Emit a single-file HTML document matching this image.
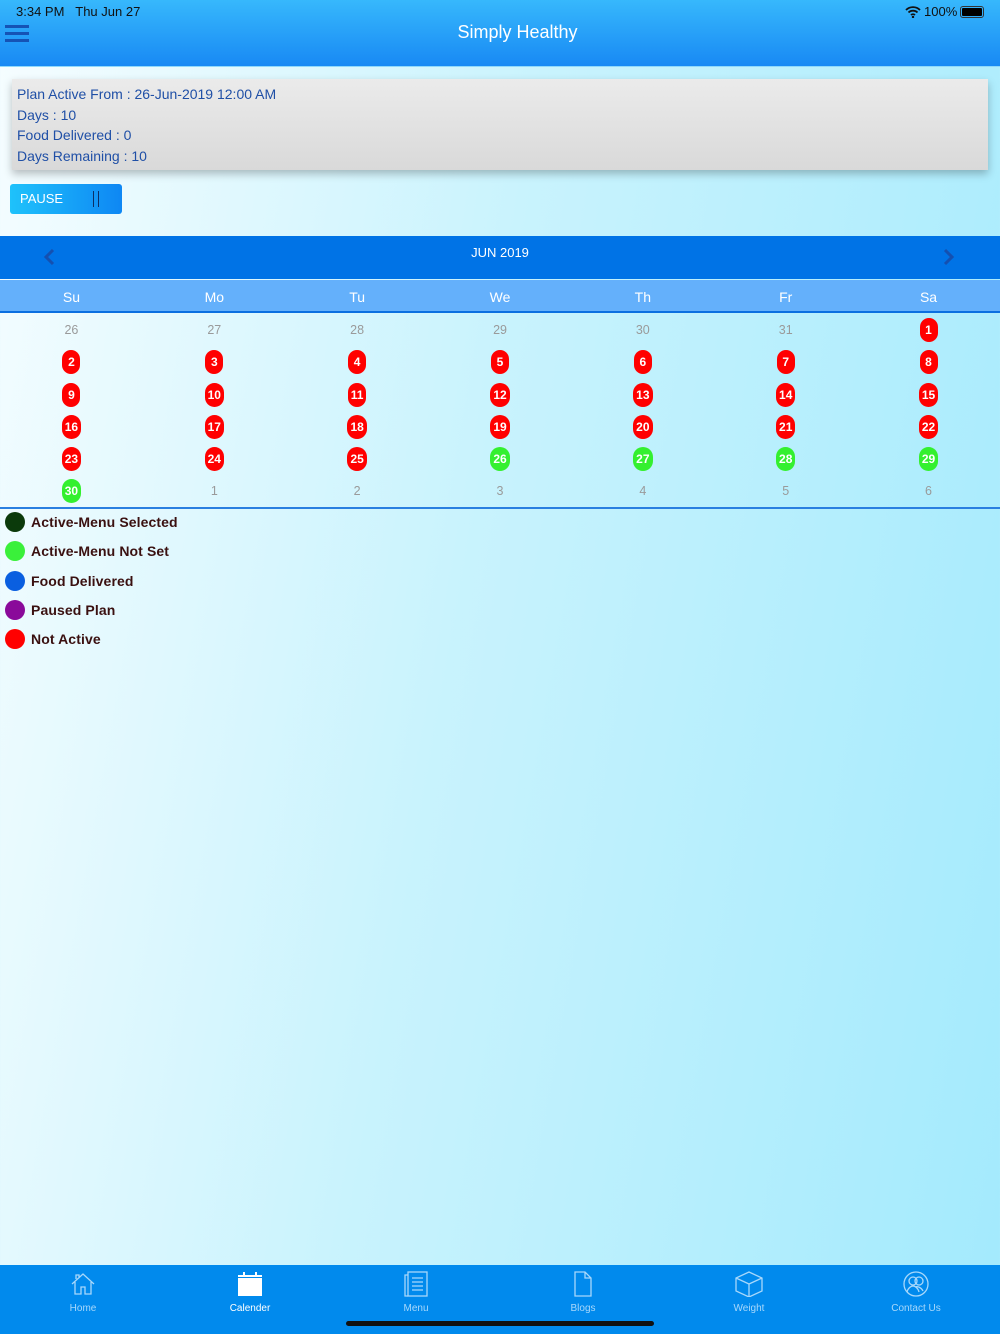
<!DOCTYPE html>
<html><head><meta charset="utf-8"><style>
*{margin:0;padding:0;box-sizing:border-box}
body{width:1000px;height:1334px;position:relative;overflow:hidden;font-family:"Liberation Sans","DejaVu Sans",sans-serif;background:linear-gradient(100deg,#f6fdff 0%,#c9f3fd 45%,#a3eafd 100%)}
.abs{position:absolute}
.hdr{left:0;top:0;width:1000px;height:67px;background:linear-gradient(#37b8fc,#1889f4);border-bottom:1px solid #8ed8fb}
.card{left:12px;top:79px;width:976px;height:91px;background:linear-gradient(#ebebeb,#d9d9d9);box-shadow:0 4px 8px rgba(0,0,0,.25);color:#1f4fa6;font-size:14px;line-height:20.5px;padding:5px 5px}
.btn{left:10px;top:184px;width:112px;height:30px;border-radius:3px;background:linear-gradient(90deg,#1fc2fb,#0e87f4);color:#fff;font-size:13px;line-height:30px;padding-left:10px}
.cal{left:0;top:236px;width:1000px;height:43px;background:#0073e6}
.dn{left:0;top:280px;width:1000px;height:33px;background:#64b0fb;border-bottom:2px solid #0b6fe0}
.cell{position:absolute;width:142.86px;text-align:center;font-size:12.5px}
.b{display:inline-block;color:#fff;font-weight:bold;border-radius:12px;height:24px;line-height:24px;min-width:18px;padding:0 3px;font-size:12px}
.r{background:#ff0000}.g{background:#34f02f}
.gr{color:#9a9a9a}
.leg{left:5px;font-size:14px;font-weight:bold;color:#3a1010;letter-spacing:.1px;line-height:20px}
.leg i{display:inline-block;width:20px;height:20px;border-radius:50%;vertical-align:top;margin-right:6px}
.tab{left:0;top:1265px;width:1000px;height:69px;background:#018aed}
.ti{position:absolute;top:1271px;width:100px;text-align:center;color:#a8d8fb;font-size:10px}
.ti svg{display:block;margin:0 auto 6px}
.hb{position:absolute;left:5px;width:24px;height:3px;background:#1553b5}
</style></head><body>
<div class="abs hdr"></div>
<div class="abs" style="left:16px;top:4px;font-size:13px;color:#111">3:34 PM&nbsp;&nbsp;&nbsp;Thu Jun 27</div>
<div class="abs" style="left:924px;top:4px;font-size:13px;color:#111">100%</div>
<svg class="abs" style="left:905px;top:6px" width="16" height="12" viewBox="0 0 16 12"><path d="M1 4a10 10 0 0 1 14 0M3.5 6.5a6.5 6.5 0 0 1 9 0M6 9a3 3 0 0 1 4 0" stroke="#111" stroke-width="1.8" fill="none"/><circle cx="8" cy="11" r="1.2" fill="#111"/></svg>
<div class="abs" style="left:960px;top:6px;width:24px;height:12px;border:1px solid #333;border-radius:3px;padding:1px"><div style="background:#000;width:100%;height:100%;border-radius:1px"></div></div>
<div class="hb" style="top:25px"></div><div class="hb" style="top:32px"></div><div class="hb" style="top:39px"></div>
<div class="abs" style="left:0;width:1035px;top:22px;text-align:center;color:#fff;font-size:18px">Simply Healthy</div>
<div class="abs card">Plan Active From : 26-Jun-2019 12:00 AM<br>Days : 10<br>Food Delivered : 0<br>Days Remaining : 10</div>
<div class="abs btn">PAUSE<span class="abs" style="left:83px;top:7px;width:6px;height:16px;border-left:1.5px solid #0b2f66;border-right:1.5px solid #0b2f66"></span></div>
<div class="abs cal"></div>
<svg class="abs" style="left:42px;top:248px" width="14" height="18"><path d="M11 2L4 9l7 7" stroke="#1450b0" stroke-width="3" fill="none"/></svg>
<svg class="abs" style="left:942px;top:248px" width="14" height="18"><path d="M3 2l7 7-7 7" stroke="#1450b0" stroke-width="3" fill="none"/></svg>
<div class="abs" style="left:0;width:1000px;top:245px;text-align:center;color:#fff;font-size:13px">JUN 2019</div>
<div class="abs dn"></div>
<div class="abs" style="left:0;top:289px;width:1000px;color:#fff;font-size:14px">
<div class="cell" style="left:0;font-size:14px">Su</div><div class="cell" style="left:142.86px;font-size:14px">Mo</div><div class="cell" style="left:285.7px;font-size:14px">Tu</div><div class="cell" style="left:428.6px;font-size:14px">We</div><div class="cell" style="left:571.4px;font-size:14px">Th</div><div class="cell" style="left:714.3px;font-size:14px">Fr</div><div class="cell" style="left:857.1px;font-size:14px">Sa</div></div>
<div class="abs" style="left:0;top:0;width:1000px">
<div class="cell gr" style="left:0;top:323px">26</div><div class="cell gr" style="left:142.86px;top:323px">27</div><div class="cell gr" style="left:285.7px;top:323px">28</div><div class="cell gr" style="left:428.6px;top:323px">29</div><div class="cell gr" style="left:571.4px;top:323px">30</div><div class="cell gr" style="left:714.3px;top:323px">31</div><div class="cell" style="left:857.1px;top:318px"><span class="b r">1</span></div>
<div class="cell" style="left:0;top:350px"><span class="b r">2</span></div><div class="cell" style="left:142.86px;top:350px"><span class="b r">3</span></div><div class="cell" style="left:285.7px;top:350px"><span class="b r">4</span></div><div class="cell" style="left:428.6px;top:350px"><span class="b r">5</span></div><div class="cell" style="left:571.4px;top:350px"><span class="b r">6</span></div><div class="cell" style="left:714.3px;top:350px"><span class="b r">7</span></div><div class="cell" style="left:857.1px;top:350px"><span class="b r">8</span></div>
<div class="cell" style="left:0;top:383px"><span class="b r">9</span></div><div class="cell" style="left:142.86px;top:383px"><span class="b r">10</span></div><div class="cell" style="left:285.7px;top:383px"><span class="b r">11</span></div><div class="cell" style="left:428.6px;top:383px"><span class="b r">12</span></div><div class="cell" style="left:571.4px;top:383px"><span class="b r">13</span></div><div class="cell" style="left:714.3px;top:383px"><span class="b r">14</span></div><div class="cell" style="left:857.1px;top:383px"><span class="b r">15</span></div>
<div class="cell" style="left:0;top:415px"><span class="b r">16</span></div><div class="cell" style="left:142.86px;top:415px"><span class="b r">17</span></div><div class="cell" style="left:285.7px;top:415px"><span class="b r">18</span></div><div class="cell" style="left:428.6px;top:415px"><span class="b r">19</span></div><div class="cell" style="left:571.4px;top:415px"><span class="b r">20</span></div><div class="cell" style="left:714.3px;top:415px"><span class="b r">21</span></div><div class="cell" style="left:857.1px;top:415px"><span class="b r">22</span></div>
<div class="cell" style="left:0;top:447px"><span class="b r">23</span></div><div class="cell" style="left:142.86px;top:447px"><span class="b r">24</span></div><div class="cell" style="left:285.7px;top:447px"><span class="b r">25</span></div><div class="cell" style="left:428.6px;top:447px"><span class="b g">26</span></div><div class="cell" style="left:571.4px;top:447px"><span class="b g">27</span></div><div class="cell" style="left:714.3px;top:447px"><span class="b g">28</span></div><div class="cell" style="left:857.1px;top:447px"><span class="b g">29</span></div>
<div class="cell" style="left:0;top:479px"><span class="b g">30</span></div><div class="cell gr" style="left:142.86px;top:484px">1</div><div class="cell gr" style="left:285.7px;top:484px">2</div><div class="cell gr" style="left:428.6px;top:484px">3</div><div class="cell gr" style="left:571.4px;top:484px">4</div><div class="cell gr" style="left:714.3px;top:484px">5</div><div class="cell gr" style="left:857.1px;top:484px">6</div>
</div>
<div class="abs" style="left:0;top:507px;width:1000px;height:1.5px;background:#2a7fe0"></div>
<div class="abs leg" style="top:512px"><i style="background:#0b3a0b"></i>Active-Menu Selected</div>
<div class="abs leg" style="top:541px"><i style="background:#3af03a"></i>Active-Menu Not Set</div>
<div class="abs leg" style="top:571px"><i style="background:#0a5fe0"></i>Food Delivered</div>
<div class="abs leg" style="top:600px"><i style="background:#8a0a9a"></i>Paused Plan</div>
<div class="abs leg" style="top:629px"><i style="background:#ff0000"></i>Not Active</div>
<div class="abs tab"></div>
<div class="ti" style="left:33px"><svg width="26" height="26" viewBox="0 0 26 26" fill="none" stroke="#a8d8fb" stroke-width="1.3"><path d="M2 13L13 3l11 10M5 11v12h6v-7h4v7h6V11M6 8V4h3v2"/></svg>Home</div>
<div class="ti" style="left:200px;color:#fff"><svg width="26" height="26" viewBox="0 0 26 26"><rect x="1" y="4" width="24" height="21" fill="#fff"/><rect x="1" y="6" width="24" height="1" fill="#018aed"/><rect x="6" y="1" width="2" height="4" fill="#fff"/><rect x="18" y="1" width="2" height="4" fill="#fff"/></svg>Calender</div>
<div class="ti" style="left:366px"><svg width="26" height="26" viewBox="0 0 26 26" fill="none" stroke="#a8d8fb" stroke-width="1.3"><rect x="5" y="1" width="19" height="24"/><path d="M5 4H2v21h3M9 7h11M9 11h11M9 15h11M9 19h11"/></svg>Menu</div>
<div class="ti" style="left:533px"><svg width="26" height="26" viewBox="0 0 26 26" fill="none" stroke="#a8d8fb" stroke-width="1.3"><path d="M5 1h10l6 6v18H5zM15 1v6h6"/></svg>Blogs</div>
<div class="ti" style="left:699px"><svg width="28" height="26" viewBox="0 0 28 26" fill="none" stroke="#a8d8fb" stroke-width="1.3"><path d="M14 1L27 7v13l-13 6L1 20V7zM1 7l13 6 13-6M14 13v13"/></svg>Weight</div>
<div class="ti" style="left:866px"><svg width="26" height="26" viewBox="0 0 26 26" fill="none" stroke="#a8d8fb" stroke-width="1.3"><circle cx="13" cy="13" r="12"/><circle cx="10" cy="10" r="4"/><circle cx="16" cy="10" r="4"/><path d="M4 21c1-4 4-6 6-6s5 2 6 6M12 16c2-1 6 0 8 4"/></svg>Contact Us</div>
<div class="abs" style="left:346px;top:1321px;width:308px;height:5px;border-radius:3px;background:#111"></div>
</body></html>
